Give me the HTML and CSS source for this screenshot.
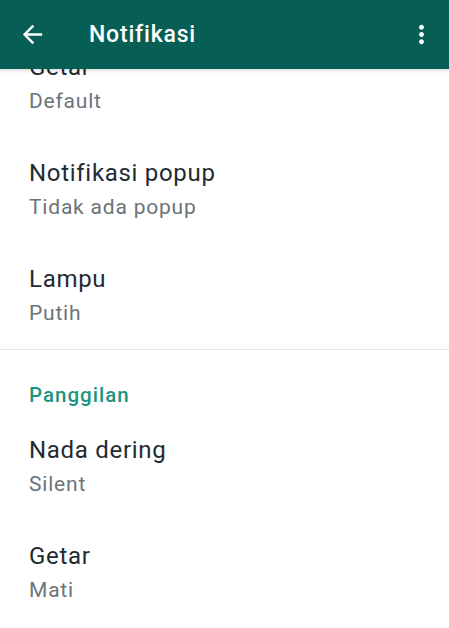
FILE: index.html
```html
<!DOCTYPE html>
<html>
<head>
    <meta charset="UTF-8">
    <title>Notifikasi</title>
    <link rel="stylesheet" href="styles.css">
</head>
<body>
    <div class="toolbar">
        <svg class="icon back" viewBox="0 0 24 24">
            <path d="M20 11H7.83l5.59-5.59L12 4l-8 8 8 8 1.41-1.41L7.83 13H20v-2z" fill="#ffffff"/>
        </svg>
        <h1>Notifikasi</h1>
        <svg class="icon more" viewBox="0 0 24 24">
            <path d="M12 8c1.1 0 2-.9 2-2s-.9-2-2-2-2 .9-2 2 .9 2 2 2zm0 2c-1.1 0-2 .9-2 2s.9 2 2 2 2-.9 2-2-.9-2-2-2zm0 6c-1.1 0-2 .9-2 2s.9 2 2 2 2-.9 2-2-.9-2-2-2z" fill="#ffffff"/>
        </svg>
    </div>

    <div class="list">
        <div class="group">
            <div class="item">
                <div class="title">Getar</div>
                <div class="summary">Default</div>
            </div>
            <div class="item">
                <div class="title">Notifikasi popup</div>
                <div class="summary">Tidak ada popup</div>
            </div>
            <div class="item">
                <div class="title">Lampu</div>
                <div class="summary">Putih</div>
            </div>
        </div>

        <div class="group">
            <div class="category">Panggilan</div>
            <div class="item">
                <div class="title">Nada dering</div>
                <div class="summary">Silent</div>
            </div>
            <div class="item">
                <div class="title">Getar</div>
                <div class="summary">Mati</div>
            </div>
        </div>
    </div>
</body>
</html>
```

FILE: styles.css
```css
body {
    margin: 0;
    background-color: #ffffff;
    font-family: Roboto, "Noto Sans", sans-serif;
    overflow: hidden;
}

.toolbar {
    position: relative;
    z-index: 2;
    display: flex;
    align-items: center;
    height: 69px;
    padding: 0 13px 0 18px;
    background-color: #075e55;
    box-shadow: 0 2px 3px rgba(0,0,0,0.12);
}

.toolbar .back {
    width: 29px;
    height: 29px;
}

.toolbar h1 {
    flex: 1;
    margin: 0 0 0 42px;
    color: #ffffff;
    font-size: 23px;
    font-weight: 500;
    letter-spacing: 0.8px;
}

.toolbar .more {
    width: 29px;
    height: 29px;
}

.list {
    margin-top: -35px;
}

.group {
    border-bottom: 1px solid #e8e8e8;
}

.group:last-child {
    border-bottom: none;
}

.item {
    padding: 18px 29px 26px;
}

.group .item:last-child {
    padding-bottom: 23px;
}

.title {
    color: #1f2b32;
    font-size: 24px;
    line-height: 30px;
    letter-spacing: 0.7px;
}

.summary {
    margin-top: 6px;
    color: #6b7479;
    font-size: 21px;
    line-height: 26px;
    letter-spacing: 0.8px;
}

.category {
    padding: 33px 29px 10px;
    color: #1b9582;
    font-size: 20.5px;
    font-weight: 500;
    line-height: 24px;
    letter-spacing: 1px;
}
```
